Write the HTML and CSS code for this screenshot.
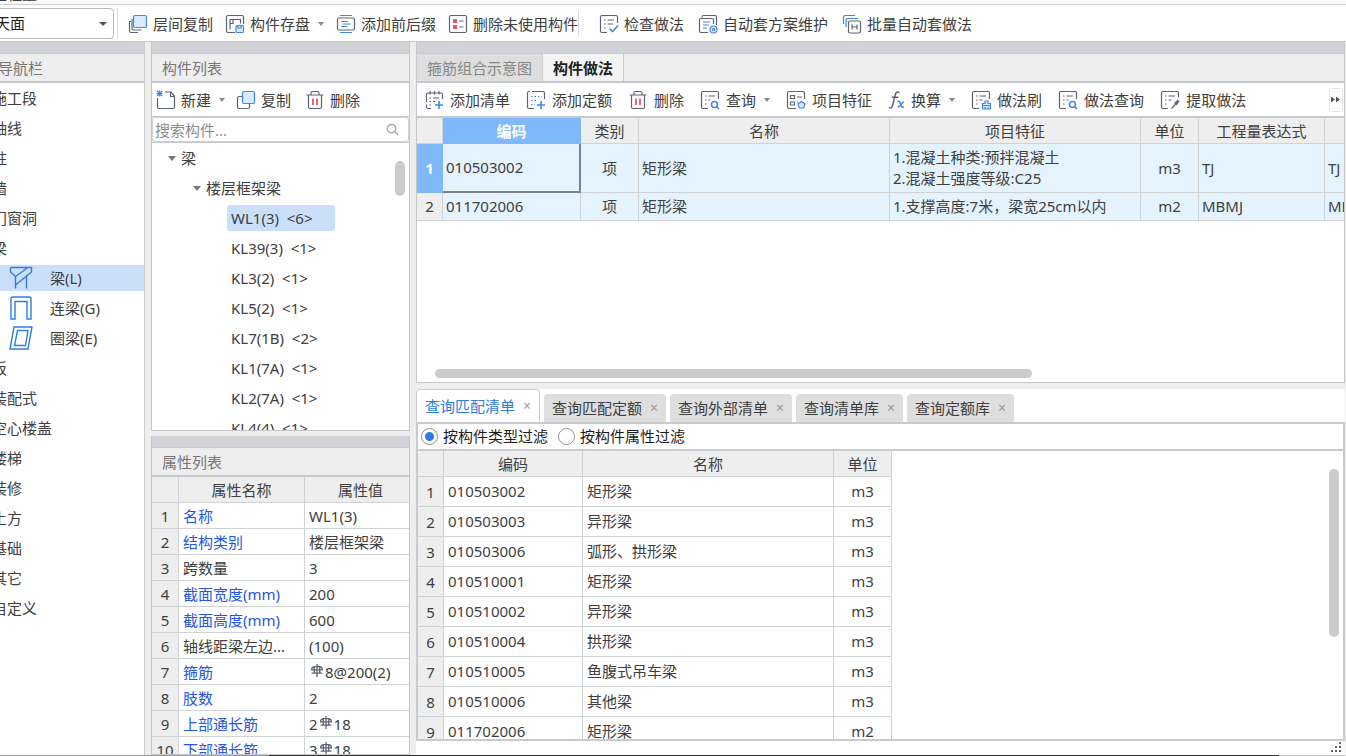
FILE: index.html
```html
<!DOCTYPE html>
<html lang="zh-CN">
<head>
<meta charset="utf-8">
<title>构件做法</title>
<link rel="stylesheet" href="styles.css">
</head>
<body>
<svg class="defs" aria-hidden="true">
  <symbol id="i-layers" viewBox="0 0 20 20"><path class="k" d="M3 7.500H1.500v9.500q0 1.500 1.500 1.500H10"/><path class="k" d="M4 5v9.500q0 1.500 1.500 1.500h8"/><rect class="bf" x="5.500" y="1.500" width="13" height="12" rx="1.500"/></symbol>
  <symbol id="i-save" viewBox="0 0 20 20"><path class="k" d="M10 18.500H3q-1.500 0-1.500-1.500V3q0-1.500 1.500-1.500h14q1.500 0 1.500 1.500v7"/><path class="k" d="M5 15.500V5.500h10.500v4M5 9.500h3V5.500"/><rect class="bf" x="11" y="11.500" width="7.500" height="7" rx="1"/><path class="b" d="M13 11.500v2.500h3v-2.500"/></symbol>
  <symbol id="i-affix" viewBox="0 0 20 20"><path class="b" d="M4 1.500h12M4 18.500h12M5 7.500h7M6.500 10h8M5 12.500h6"/><rect class="k" x="1.500" y="4" width="17" height="12" rx="1.500"/></symbol>
  <symbol id="i-unused" viewBox="0 0 20 20"><rect class="k" x="1.500" y="1.500" width="17" height="17" rx="1.500"/><path class="rf" d="M5 5h4v4H5zM5 11h4v4H5z"/><path class="k" d="M11.500 7h4M11.500 13h4"/></symbol>
  <symbol id="i-check" viewBox="0 0 20 20"><path class="k" d="M8 18.500H3q-1.500 0-1.500-1.500V3q0-1.500 1.500-1.500h14q1.500 0 1.500 1.500v6M5 6h1.500M8.500 6H15M5 10h1.500M8.500 10H14M5 14h1.500"/><path class="b2" d="M10.500 14.500l3 3 5.500-6"/></symbol>
  <symbol id="i-scheme" viewBox="0 0 20 20"><path class="k" d="M4 3.500V3q0-1.500 1.500-1.500H17q1.500 0 1.500 1.500v8"/><path class="k" d="M10 18.500H3q-1.500 0-1.500-1.500V6q0-1.500 1.500-1.500h11q1.500 0 1.500 1.500v4"/><path class="b" d="M5 8h7M5 11h6M5 14h4"/><circle class="bf" cx="15.500" cy="15.500" r="3.500"/><circle class="b" cx="15.500" cy="15.500" r="1"/></symbol>
  <symbol id="i-batch" viewBox="0 0 20 20"><path class="b" d="M1.500 10V3q0-1.500 1.500-1.500h10M4 13V6q0-1.500 1.500-1.500H16"/><rect class="k" x="6.500" y="7" width="12" height="12" rx="1.500"/><path class="k" d="M10 10.500v5M15 10.500v5M10 13h5"/></symbol>
  <symbol id="i-new" viewBox="0 0 20 20"><path class="k" d="M9 2h6l3.500 4v11q0 1.500-1.500 1.500H3q-1.500 0-1.500-1.500V8M14.500 2v4.500h4"/><path class="b" d="M1 1l5 5M6 1l-5 5M3.500 .5v6M.5 3.500h6"/></symbol>
  <symbol id="i-copy" viewBox="0 0 20 20"><path class="k" d="M6 6.500H3Q1.500 6.500 1.500 8v9q0 1.500 1.500 1.500h9q1.500 0 1.500-1.500v-3"/><rect class="bf" x="6.500" y="1.500" width="12" height="12" rx="1.500"/></symbol>
  <symbol id="i-trash" viewBox="0 0 20 20"><path class="k" d="M1.500 5h17M6 5V3q0-1.500 1.500-1.500h5Q14 1.500 14 3v2M3.500 5v12q0 1.500 1.500 1.500h10q1.500 0 1.500-1.500V5"/><path class="r" d="M8 8.500v6.500M12 8.500v6.500"/></symbol>
  <symbol id="i-addlist" viewBox="0 0 20 20"><path class="k" d="M7 18.500H4q-1.500 0-1.500-1.500v-2.500M2.500 12V4.500Q2.500 3 4 3h13q1.500 0 1.500 1.500V9M6 1v3.500M10.500 1v3.500M15 1v3.500M5.500 8h1.500M9 8h6M5.500 11.500h1.500M9 11.500h2M5.500 15h1.500"/><path class="b2" d="M15 11v8M11 15h8"/></symbol>
  <symbol id="i-addquota" viewBox="0 0 20 20"><path class="k" d="M8 18.500H3q-1.500 0-1.500-1.500V3q0-1.500 1.500-1.500h1M6 1.500h11q1.500 0 1.500 1.500v6"/><path class="b dots" d="M5 6.500h11M5 10.500h6M5 14.500h4"/><path class="b2" d="M15 11v8M11 15h8"/></symbol>
  <symbol id="i-query" viewBox="0 0 20 20"><path class="k" d="M8 18.500H3q-1.500 0-1.500-1.500V3q0-1.500 1.500-1.500h14q1.500 0 1.500 1.500v6M5 6h1.500M8.500 6H15M5 10h1.500M8.500 10h2M5 14h1.500"/><circle class="b2" cx="14.500" cy="14.500" r="3"/><path class="b2" d="M16.500 16.500l2.500 2.500"/></symbol>
  <symbol id="i-feature" viewBox="0 0 20 20"><path class="k" d="M10 18.500H3q-1.500 0-1.500-1.500V3q0-1.500 1.500-1.500h14q1.500 0 1.500 1.500v6M4.500 5.500h4v3h-4zM4.500 12h4v3h-4zM11 7h5M11 12h1"/><path class="bf" d="M15.500 11.500l3.500 2.500-1.300 4h-4.400L12 14z"/></symbol>
  <symbol id="i-brush" viewBox="0 0 20 20"><path class="k" d="M8 18.500H3q-1.500 0-1.500-1.500V3q0-1.500 1.500-1.500h14q1.500 0 1.500 1.500v6M5 6h1.500M8.500 6H15M5 10h1.500M8.500 10h3M5 14h1.500"/><path class="bf" d="M14 11h3v2.500h2.500v5.500h-8v-5.500H14zM11.500 15.500h8M14 17v2M17 17v2"/></symbol>
  <symbol id="i-extract" viewBox="0 0 20 20"><path class="k" d="M8 18.500H3q-1.500 0-1.500-1.500V3q0-1.500 1.500-1.500h14q1.500 0 1.500 1.500v4M5 6h1.500M8.500 6H15M5 10h1.500M8.500 10h3M5 14h1.500M11.500 18.500l5-5.500"/><path class="kf" d="M14 13l2-1.500 1.500-2 2 2-1.500 2-1.500 2z"/></symbol>
  <symbol id="i-fx" viewBox="0 0 18 20"><path class="k2" d="M12 2.500Q9-.500 7.500 5L5 15.500Q4 19.500 1 18M4 7h7"/><path class="b2" d="M10 11.500q2-1 3 2l1 3q1 2 3 .5M16.500 11.500l-6 6.500"/></symbol>
  <symbol id="i-rebar" viewBox="0 0 12 12"><path class="k" d="M6 0v12M3.500 2v7M8.500 2v7M1 8.500h10M3.500 2.500h5M3.500 2.500Q1 3 1 5.500h10Q11 3 8.500 2.500"/></symbol>
  <symbol id="i-beam" viewBox="0 0 24 24"><path class="n" d="M1.500 1.500h21v4.500L17.500 10v12.500M1.500 1.500V6l5 4.500v12M6.500 10.500L19 1.500M6.500 19L17.500 10"/></symbol>
  <symbol id="i-link" viewBox="0 0 24 24"><path class="n" d="M2 23V3q0-2 2-2h16q2 0 2 2v20h-4V5.500H6V23z"/></symbol>
  <symbol id="i-ring" viewBox="0 0 24 24"><path class="n" d="M5 1h18l-4 22H1zM8.500 4.500h10.500l-2.500 15H5.500z"/></symbol>
</svg>

<div class="app">
  <div class="menu-strip"><span>工程量</span></div>

  <header class="main-bar">
    <div class="floor"><select aria-label="楼层"><option>天面</option></select></div>
    <div class="group">
      <button><svg class="ic"><use href="#i-layers"/></svg>层间复制</button>
      <button><svg class="ic"><use href="#i-save"/></svg>构件存盘<i class="caret"></i></button>
      <button><svg class="ic"><use href="#i-affix"/></svg>添加前后缀</button>
      <button><svg class="ic"><use href="#i-unused"/></svg>删除未使用构件</button>
    </div>
    <div class="group second">
      <button><svg class="ic"><use href="#i-check"/></svg>检查做法</button>
      <button><svg class="ic"><use href="#i-scheme"/></svg>自动套方案维护</button>
      <button><svg class="ic"><use href="#i-batch"/></svg>批量自动套做法</button>
    </div>
  </header>

  <div class="work">
    <nav class="side">
      <div class="band"></div>
      <h2 class="side-title">导航栏</h2>
      <ul class="side-list">
        <li>施工段</li><li>轴线</li><li>柱</li><li>墙</li><li>门窗洞</li><li>梁</li>
        <li class="sub on"><svg class="ni"><use href="#i-beam"/></svg>梁(L)</li>
        <li class="sub"><svg class="ni"><use href="#i-link"/></svg>连梁(G)</li>
        <li class="sub"><svg class="ni"><use href="#i-ring"/></svg>圈梁(E)</li>
        <li>板</li><li>装配式</li><li>空心楼盖</li><li>楼梯</li><li>装修</li><li>土方</li><li>基础</li><li>其它</li><li>自定义</li>
      </ul>
    </nav>

    <section class="mid">
      <div class="comp">
        <div class="band"></div>
        <h2 class="title">构件列表</h2>
        <div class="bar comp-bar">
          <button><svg class="ic"><use href="#i-new"/></svg>新建<i class="caret"></i></button>
          <button><svg class="ic"><use href="#i-copy"/></svg>复制</button>
          <button><svg class="ic"><use href="#i-trash"/></svg>删除</button>
        </div>
        <div class="search">
          <input type="text" placeholder="搜索构件..." aria-label="搜索构件">
          <svg class="mag" viewBox="0 0 14 14"><circle cx="6" cy="6" r="4.500"/><path d="M9.500 9.500L13 13"/></svg>
        </div>
        <div class="tree">
          <ul>
            <li class="l1"><i class="tri"></i>梁</li>
            <li class="l2"><i class="tri"></i>楼层框架梁</li>
            <li class="l3"><span class="on">WL1(3)&nbsp; &lt;6&gt;</span></li>
            <li class="l3"><span>KL39(3)&nbsp; &lt;1&gt;</span></li>
            <li class="l3"><span>KL3(2)&nbsp; &lt;1&gt;</span></li>
            <li class="l3"><span>KL5(2)&nbsp; &lt;1&gt;</span></li>
            <li class="l3"><span>KL7(1B)&nbsp; &lt;2&gt;</span></li>
            <li class="l3"><span>KL1(7A)&nbsp; &lt;1&gt;</span></li>
            <li class="l3"><span>KL2(7A)&nbsp; &lt;1&gt;</span></li>
            <li class="l3"><span>KL4(4)&nbsp; &lt;1&gt;</span></li>
          </ul>
          <div class="thumb"></div>
        </div>
      </div>
      <div class="props">
        <div class="band"></div>
        <h2 class="title">属性列表</h2>
        <div class="clip">
          <table class="grid prop-grid">
            <colgroup><col class="c27"><col class="c126"><col class="c112"></colgroup>
            <thead><tr><th></th><th>属性名称</th><th>属性值</th></tr></thead>
            <tbody>
              <tr><th>1</th><td class="lk">名称</td><td>WL1(3)</td></tr>
              <tr><th>2</th><td class="lk">结构类别</td><td>楼层框架梁</td></tr>
              <tr><th>3</th><td>跨数量</td><td>3</td></tr>
              <tr><th>4</th><td class="lk">截面宽度(mm)</td><td>200</td></tr>
              <tr><th>5</th><td class="lk">截面高度(mm)</td><td>600</td></tr>
              <tr><th>6</th><td>轴线距梁左边...</td><td>(100)</td></tr>
              <tr><th>7</th><td class="lk">箍筋</td><td><svg class="rb"><use href="#i-rebar"/></svg>8@200(2)</td></tr>
              <tr><th>8</th><td class="lk">肢数</td><td>2</td></tr>
              <tr><th>9</th><td class="lk">上部通长筋</td><td>2<svg class="rb"><use href="#i-rebar"/></svg>18</td></tr>
              <tr><th>10</th><td class="lk">下部通长筋</td><td>3<svg class="rb"><use href="#i-rebar"/></svg>18</td></tr>
            </tbody>
          </table>
        </div>
      </div>
    </section>

    <main class="right">
      <div class="upper">
        <div class="band"></div>
        <div class="tabs"><button class="tab">箍筋组合示意图</button><button class="tab on">构件做法</button></div>
        <div class="bar method-bar">
          <button><svg class="ic"><use href="#i-addlist"/></svg>添加清单</button>
          <button><svg class="ic"><use href="#i-addquota"/></svg>添加定额</button>
          <button><svg class="ic"><use href="#i-trash"/></svg>删除</button>
          <button><svg class="ic"><use href="#i-query"/></svg>查询<i class="caret"></i></button>
          <button><svg class="ic"><use href="#i-feature"/></svg>项目特征</button>
          <button><svg class="ic fx"><use href="#i-fx"/></svg>换算<i class="caret"></i></button>
          <button><svg class="ic"><use href="#i-brush"/></svg>做法刷</button>
          <button><svg class="ic"><use href="#i-query"/></svg>做法查询</button>
          <button><svg class="ic"><use href="#i-extract"/></svg>提取做法</button>
          <button class="more" aria-label="更多"><svg viewBox="0 0 10 6"><path d="M0 0l4 3-4 3zM5 0l4 3-4 3z"/></svg></button>
        </div>
        <div class="clip sheet">
          <table class="grid method-grid">
            <colgroup><col class="c26"><col class="c138"><col class="c58"><col class="c251"><col class="c251"><col class="c58"><col class="c126"><col class="c126"></colgroup>
            <thead><tr><th></th><th class="sel">编码</th><th>类别</th><th>名称</th><th>项目特征</th><th>单位</th><th>工程量表达式</th><th></th></tr></thead>
            <tbody>
              <tr class="tall"><th class="sel">1</th><td class="cur">010503002</td><td class="ctr">项</td><td>矩形梁</td><td>1.混凝土种类:预拌混凝土<br>2.混凝土强度等级:C25</td><td class="ctr">m3</td><td>TJ</td><td>TJ</td></tr>
              <tr><th>2</th><td>011702006</td><td class="ctr">项</td><td>矩形梁</td><td>1.支撑高度:7米，梁宽25cm以内</td><td class="ctr">m2</td><td>MBMJ</td><td>MBMJ</td></tr>
            </tbody>
          </table>
        </div>
        <div class="hscroll"><div class="hthumb"></div></div>
      </div>

      <div class="lower">
        <div class="qtabs">
          <button class="qtab on">查询匹配清单<span>×</span></button>
          <button class="qtab">查询匹配定额<span>×</span></button>
          <button class="qtab">查询外部清单<span>×</span></button>
          <button class="qtab">查询清单库<span>×</span></button>
          <button class="qtab">查询定额库<span>×</span></button>
        </div>
        <div class="result">
          <div class="filters">
            <label><input type="radio" name="filter" checked>按构件类型过滤</label>
            <label><input type="radio" name="filter">按构件属性过滤</label>
          </div>
          <div class="clip list">
            <table class="grid query-grid">
              <colgroup><col class="c26"><col class="c139"><col class="c251"><col class="c58"></colgroup>
              <thead><tr><th></th><th>编码</th><th>名称</th><th>单位</th></tr></thead>
              <tbody>
                <tr><th>1</th><td>010503002</td><td>矩形梁</td><td class="ctr">m3</td></tr>
                <tr><th>2</th><td>010503003</td><td>异形梁</td><td class="ctr">m3</td></tr>
                <tr><th>3</th><td>010503006</td><td>弧形、拱形梁</td><td class="ctr">m3</td></tr>
                <tr><th>4</th><td>010510001</td><td>矩形梁</td><td class="ctr">m3</td></tr>
                <tr><th>5</th><td>010510002</td><td>异形梁</td><td class="ctr">m3</td></tr>
                <tr><th>6</th><td>010510004</td><td>拱形梁</td><td class="ctr">m3</td></tr>
                <tr><th>7</th><td>010510005</td><td>鱼腹式吊车梁</td><td class="ctr">m3</td></tr>
                <tr><th>8</th><td>010510006</td><td>其他梁</td><td class="ctr">m3</td></tr>
                <tr><th>9</th><td>011702006</td><td>矩形梁</td><td class="ctr">m2</td></tr>
              </tbody>
            </table>
            <div class="vthumb"></div>
          </div>
        </div>
        <div class="grip"><svg viewBox="0 0 10 10"><path d="M8 0h2v2H8zM4 4h2v2H4zM8 4h2v2H8zM0 8h2v2H0zM4 8h2v2H4zM8 8h2v2H8z"/></svg></div>
      </div>
    </main>
  </div>
  <div class="edge"></div>
</div>
</body>
</html>
```

FILE: styles.css
```css
* { box-sizing: border-box; }
body {
  margin: 0;
  background: #eeeeee;
  color: #404040;
  font: 15px/20px "Noto Sans", "Noto Sans CJK SC", sans-serif;
}
ul { list-style: none; margin: 0; padding: 0; }
button, input, select { font: inherit; color: inherit; }
button { border: 0; background: none; padding: 0; white-space: nowrap; }
h2 { font-size: 15px; font-weight: 400; margin: 0; color: #777777; }
.defs { position: absolute; width: 0; height: 0; }

/* icon strokes */
.k, .k2, .b, .b2, .bf, .r, .n { fill: none; stroke-width: 1.2; }
.k, .k2 { stroke: #5f6472; }
.kf { fill: #5f6472; }
.k2, .b2 { stroke-width: 1.6; }
.b, .b2, .bf { stroke: #3f88e6; }
.bf { fill: #d9e9ff; }
.r { stroke: #d9464e; stroke-width: 1.6; }
.rf { fill: #e5585d; }
.n { stroke: #2f7de0; stroke-width: 1.4; }
.dots { stroke-dasharray: 1.5 2; }

.app { height: 100vh; display: flex; flex-direction: column; overflow: hidden; }
.menu-strip { flex: none; height: 5px; background: #fafafa; border-bottom: 1px solid #cfcfcf; overflow: hidden; display: flex; align-items: flex-end; }
.menu-strip span { margin-left: -8px; }
.main-bar { flex: none; height: 37px; background: #ffffff; border-bottom: 1px solid #c6c7ca; display: flex; align-items: center; overflow: hidden; }
.floor { width: 118px; height: 31px; border-right: 1px solid #dddddd; margin-right: 10px; overflow: hidden; flex: none; position: relative; }
.floor::after { content: ""; position: absolute; right: 10px; top: 14px; border: 4px solid transparent; border-top-color: #555555; border-bottom: 0; }
.floor select { appearance: none; width: 124px; height: 31px; margin-left: -10px; padding: 0 4px; border: 1px solid #b9b9b9; border-radius: 4px; background: #ffffff; color: #222222; }
.group { display: flex; gap: 12px; }
.second { gap: 14px; border-left: 1px solid #dddddd; padding-left: 20px; }
.main-bar button, .bar button { display: flex; align-items: center; gap: 5px; height: 26px; }
.main-bar button { padding-top: 2px; }
.ic { width: 20px; height: 20px; flex: none; }
.fx { width: 17px; }
.caret { border: 3px solid transparent; border-top: 4px solid #8a8a8a; border-bottom: 0; margin: 0 0 0 3px; }

.work { flex: 1; min-height: 0; display: grid; grid-template-columns: 145px 259px minmax(0, 1fr); column-gap: 6px; padding-right: 1px; }
.band { flex: none; height: 12px; background: #d2d3d9; border-bottom: 1px solid #cccccc; }
.title, .side-title { flex: none; height: 29px; line-height: 28px; padding-left: 10px; border-bottom: 2px solid #c5c8cd; }
.side { background: #ffffff; border-right: 1px solid #cccccc; overflow: hidden; }
.side-title { background: #eeeeee; padding: 0; text-indent: -2px; }
.side-list li { height: 30px; line-height: 30px; text-indent: -8px; white-space: nowrap; }
.side-list .sub { display: flex; align-items: center; gap: 17px; padding-left: 9px; text-indent: 0; border: solid #ffffff; border-width: 2px 0; }
.side-list .on { background: #cadff9; }
.ni { width: 24px; height: 24px; }

.mid { display: grid; grid-template-columns: minmax(0, 1fr); grid-template-rows: 389px minmax(0, 1fr); row-gap: 5px; min-height: 0; }
.comp, .props { display: flex; flex-direction: column; min-height: 0; border: 1px solid #c6c7ca; border-top: 0; }
.bar { flex: none; display: flex; align-items: center; background: #ffffff; height: 34px; overflow: hidden; border-bottom: 1px solid #c5c8cd; }
.comp-bar { padding-left: 4px; gap: 11px; }
.comp-bar button + button + button { margin-left: 3px; }
.search { display: flex; align-items: center; background: #ffffff; height: 25px; padding: 0 9px 0 2px; border: 1px solid #d0d0d0; border-radius: 3px; flex: none; }
.search input { flex: 1; min-width: 0; height: 22px; border: 0; padding: 0; outline: 0; background: none; }
.search input::placeholder { color: #8c8c8c; opacity: 1; }
.mag { width: 13px; height: 13px; fill: none; stroke: #aaaaaa; stroke-width: 1.6; }
.tree { flex: 1; min-height: 0; background: #ffffff; border-top: 1px solid #c6c7ca; overflow: hidden; position: relative; }
.tree li { height: 30px; display: flex; align-items: center; gap: 5px; }
.l1 { padding-left: 16px; }
.l2 { padding-left: 41px; }
.l3 { padding-left: 75px; }
.l3 span { padding: 3px 22px 3px 4px; border-radius: 3px; }
.l3 .on { background: #cadff9; }
.tri { border: 4px solid transparent; border-top: 5px solid #777777; border-bottom: 0; }
.thumb { position: absolute; right: 4px; top: 18px; width: 10px; height: 35px; border-radius: 5px; background: #cccccc; }

.clip { overflow: hidden; min-height: 0; }
.grid { border-collapse: separate; border-spacing: 0; table-layout: fixed; }
.grid th, .grid td { height: 26px; padding: 0; border-right: 1px solid #d0d3d6; border-bottom: 1px solid #d0d3d6; font-weight: 400; overflow: hidden; white-space: nowrap; }
.grid th { background: #eeeeee; }
.grid td { background: #ffffff; text-align: left; padding-left: 3px; }
.grid td.lk { color: #2456ea; }
.c26 { width: 26px; } .c27 { width: 27px; } .c58 { width: 58px; } .c112 { width: 112px; } .c126 { width: 126px; }
.c138 { width: 138px; } .c139 { width: 139px; } .c251 { width: 251px; }
.prop-grid { width: 265px; }
.prop-grid td { padding-left: 4px; }
.props .clip { flex: 1; }
.rb { width: 14px; height: 13px; margin: 0 1px; vertical-align: 1px; }

.right { display: flex; flex-direction: column; min-width: 0; min-height: 0; }
.upper { flex: none; height: 341px; display: flex; flex-direction: column; background: #ffffff; border: 1px solid #c6c7ca; border-top: 0; }
.tabs { flex: none; display: flex; height: 29px; background: #eeeeee; border-bottom: 2px solid #c5c8cd; }
.tab { padding: 0 10px; background: #dedede; color: #888888; border-right: 1px solid #cccccc; }
.tab.on { background: #f3f3f3; color: #222222; font-weight: 700; }
.method-bar { padding: 0 1px 0 7px; gap: 16px; height: 35px; border-bottom-width: 2px; }
.method-bar button { gap: 6px; flex: none; }
.method-bar .caret { margin-left: 2px; }
.method-bar .more { margin-left: auto; width: 14px; height: 24px; justify-content: center; border: 1px solid #e6e6e6; border-radius: 3px; }
.more svg { width: 10px; height: 7px; fill: #555555; }
.sheet { flex: 1; }
.method-grid { width: 1034px; }
.method-grid tbody td { background: #e5f3ff; }
.method-grid tbody tr { line-height: 21px; }
.method-grid .tall td { height: 49px; }
.method-grid tbody tr + tr td { height: 28px; }
.method-grid .sel { background: #7fb8fb; color: #ffffff; font-weight: 700; border-color: #7fb8fb; }
.method-grid .cur { border-right: 2px solid #7b828b; border-bottom: 2px solid #7b828b; }
.hscroll { flex: none; padding: 0 18px 4px; }
.hthumb { width: 67%; height: 9px; border-radius: 5px; background: #cccccc; }

.lower { flex: 1; min-height: 0; display: flex; flex-direction: column; margin-top: 6px; background: #ffffff; }
.qtabs { flex: none; display: flex; align-items: flex-end; gap: 4px; height: 33px; }
.qtab { height: 28px; padding: 0 8px; background: #dedede; border-radius: 4px 4px 0 0; display: flex; align-items: center; gap: 8px; }
.qtab span { color: #999999; font-size: 14px; width: 8px; display: flex; justify-content: center; }
.qtab.on { height: 33px; background: #ffffff; color: #2a7de1; border: 1px solid #cccccc; border-bottom: 0; }
.result { flex: 1; min-height: 0; display: flex; flex-direction: column; border: 2px solid #c8cacd; }
.filters { flex: none; height: 27px; display: flex; align-items: center; gap: 10px; padding: 0 0 1px 3px; border-bottom: 2px solid #c8cacd; color: #1c1c1c; }
.filters label { display: flex; align-items: center; gap: 5px; }
.filters input { appearance: none; width: 17px; height: 17px; margin: 0; border: 1px solid #909090; border-radius: 50%; background: #ffffff; }
.filters input:checked { background: radial-gradient(circle, #2a7de1 0 4px, #ffffff 5px); }
.list { flex: 1; position: relative; }
.query-grid { width: 474px; }
.query-grid tbody th { height: 30px; }
.query-grid tbody td { height: 30px; padding-left: 4px; padding-bottom: 2px; }
.grid tbody td.ctr { text-align: center; padding-left: 0; }
.vthumb { position: absolute; right: 4px; top: 18px; width: 10px; height: 168px; border-radius: 5px; background: #cccccc; }
.grip { flex: none; height: 14px; display: flex; justify-content: flex-end; padding: 1px 4px 0 0; }
.grip svg { width: 10px; height: 10px; fill: #666666; }
.edge { flex: none; height: 1px; background: linear-gradient(to right, #999999 0 20%, #303030 20% 95%, #cccccc 95%); }
```
